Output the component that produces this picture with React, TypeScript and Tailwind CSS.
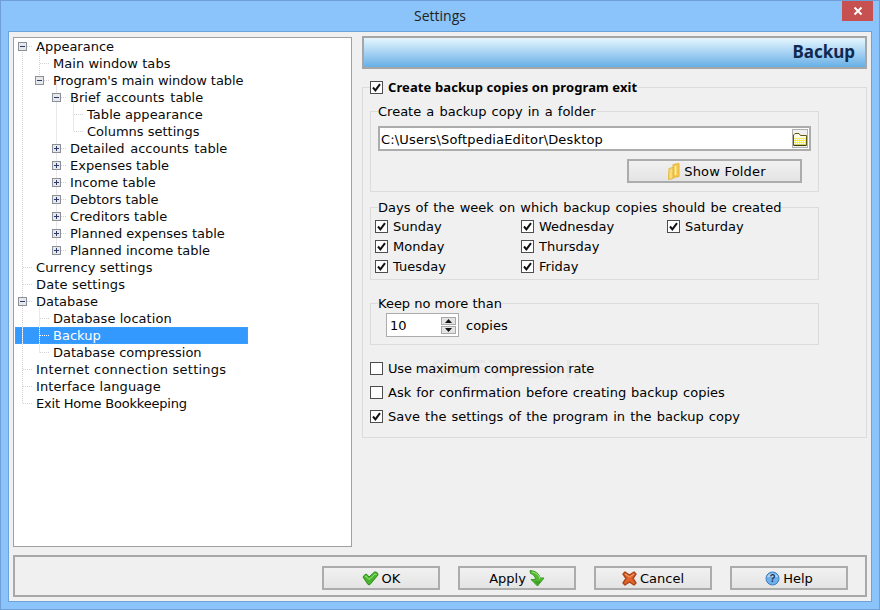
import React from 'react';

type Row = { label: string; level: 0 | 1 | 2 | 3; box?: 'minus' | 'plus'; selected?: boolean; fit?: string };

const rows: Row[] = [
  { label: 'Appearance', level: 0, box: 'minus' },
  { label: 'Main window tabs', level: 1, fit: 'tracking-[0.05px]' },
  { label: "Program's main window table", level: 1, box: 'minus', fit: 'tracking-[-0.07px]' },
  { label: 'Brief accounts table', level: 2, box: 'minus', fit: '[word-spacing:1.5px]' },
  { label: 'Table appearance', level: 3, fit: 'tracking-[0.05px]' },
  { label: 'Columns settings', level: 3 },
  { label: 'Detailed accounts table', level: 2, box: 'plus', fit: '[word-spacing:1.5px]' },
  { label: 'Expenses table', level: 2, box: 'plus' },
  { label: 'Income table', level: 2, box: 'plus', fit: 'tracking-[0.08px]' },
  { label: 'Debtors table', level: 2, box: 'plus' },
  { label: 'Creditors table', level: 2, box: 'plus', fit: 'tracking-[0.07px]' },
  { label: 'Planned expenses table', level: 2, box: 'plus' },
  { label: 'Planned income table', level: 2, box: 'plus', fit: 'tracking-[-0.05px]' },
  { label: 'Currency settings', level: 0, fit: 'tracking-[0.12px]' },
  { label: 'Date settings', level: 0, fit: 'tracking-[0.16px]' },
  { label: 'Database', level: 0, box: 'minus' },
  { label: 'Database location', level: 1, fit: 'tracking-[0.06px]' },
  { label: 'Backup', level: 1, selected: true },
  { label: 'Database compression', level: 1 },
  { label: 'Internet connection settings', level: 0, fit: 'tracking-[0.25px]' },
  { label: 'Interface language', level: 0, fit: 'tracking-[0.11px]' },
  { label: 'Exit Home Bookkeeping', level: 0, fit: 'tracking-[-0.2px]' },
];

const indent = ['pl-[21px]', 'pl-[38px]', 'pl-[55px]', 'pl-[72px]'];
const boxPos = ['left-[3px]', 'left-[20px]', 'left-[37px]', 'left-[54px]'];

// dotted connector lines of the tree, coordinates relative to the tree's inner box
const TreeLines = () => {
  const y = (i: number) => 8.5 + 17 * i;
  const d = '#d2d2d2';
  const v = (x: number, a: number, b: number) => <line x1={x} x2={x} y1={a} y2={b} stroke={d} strokeDasharray="1 1" />;
  const h = (x: number, i: number) => <line x1={x} x2={x + 10} y1={y(i)} y2={y(i)} stroke={d} strokeDasharray="1 1" />;
  return (
    <svg className="absolute left-0 top-0" width="240" height="400">
      {v(7.5, 8, y(21))}
      {v(24.5, 8, y(2))}
      {v(41.5, y(2), y(12))}
      {v(58.5, y(3), y(5))}
      {v(24.5, y(15), y(18))}
      {[1, 2, 16, 17, 18].map((i) => <React.Fragment key={i}>{h(25, i)}</React.Fragment>)}
      {[3, 6, 7, 8, 9, 10, 11, 12].map((i) => <React.Fragment key={i}>{h(42, i)}</React.Fragment>)}
      {[4, 5].map((i) => <React.Fragment key={i}>{h(59, i)}</React.Fragment>)}
      {[0, 13, 14, 15, 19, 20, 21].map((i) => <React.Fragment key={i}>{h(8, i)}</React.Fragment>)}
      <line x1="7.5" x2="7.5" y1="289" y2="306" stroke="#fff" strokeDasharray="1 1" />
      <line x1="24.5" x2="24.5" y1="289" y2="306" stroke="#fff" strokeDasharray="1 1" />
      <line x1="25" x2="35" y1={y(17)} y2={y(17)} stroke="#fff" strokeDasharray="1 1" />
    </svg>
  );
};

const Expander = ({ kind }: { kind: 'minus' | 'plus' }) => (
  <svg width="9" height="9" viewBox="0 0 9 9" className="block">
    <rect x="0.5" y="0.5" width="8" height="8" fill="#e8e8ea" stroke="#8b8f98" />
    <line x1="2" x2="7" y1="4.5" y2="4.5" stroke="#2d3a6e" />
    {kind === 'plus' && <line x1="4.5" x2="4.5" y1="2" y2="7" stroke="#2d3a6e" />}
  </svg>
);

const Check = ({ on = true }: { on?: boolean }) => (
  <span className="w-[13px] h-[13px] shrink-0 border border-[#4d4d4d] bg-white flex items-center justify-center">
    {on && (
      <svg width="11" height="11" viewBox="0 0 11 11">
        <path d="M2 5.5 L4.4 8.3 L9 2.2" fill="none" stroke="#111" strokeWidth="2" />
      </svg>
    )}
  </span>
);

const CheckRow = ({ label, on = true, textClass = '', className = '' }: { label: string; on?: boolean; textClass?: string; className?: string }) => (
  <label className={`flex items-center gap-[5px] h-[17px] ${className}`}>
    <Check on={on} />
    <span className={textClass}>{label}</span>
  </label>
);

const OkIcon = () => (
  <svg width="17" height="15" viewBox="0 0 17 15">
    <path d="M1 6 L3 3.5 Q4 3 5 3.5 L7 6 L12.5 1 Q14 0.5 15.5 2 L16 4 L8 13.5 Q7 14 6 13.5 Z" fill="#49b52c" stroke="#2f8a22" strokeLinejoin="round" />
    <path d="M3 5.5 L4 5 L7 8.5 L13 3 L14.5 3.5" fill="none" stroke="#a5e67f" />
  </svg>
);

const ApplyIcon = () => (
  <svg width="16" height="17" viewBox="0 0 16 17">
    <path d="M1 0.5 C6 1 10 3 11 8 L15 8 L8.5 16 L2 9.5 L6.5 9.5 C6.5 6.5 4 4 1.5 3.5 Z" fill="#52b82f" stroke="#3a9a25" strokeLinejoin="round" />
    <path d="M3 2 C7 2.5 10 5 11 9" fill="none" stroke="#a9e57c" />
    <path d="M5 11 L12 11 L8.5 15 Z" fill="#3f9f28" />
  </svg>
);

const CancelIcon = () => (
  <svg width="15" height="15" viewBox="0 0 15 15">
    <path d="M3 1 L7.5 4 L12 1 L14 3 L11 7.5 L14 12 L12 14 L7.5 11 L3 14 L1 12 L4 7.5 L1 3 Z" fill="#e0632a" stroke="#a9461c" strokeLinejoin="round" strokeWidth="1.4" />
    <path d="M3 3 L7.5 6 L12 3" fill="none" stroke="#f2a878" />
  </svg>
);

const HelpIcon = () => (
  <svg width="15" height="15" viewBox="0 0 15 15">
    <circle cx="7.5" cy="7.5" r="6.5" fill="#6fb0e8" stroke="#3c7fc0" />
    <path d="M2 6 A6 6 0 0 1 13 6 Z" fill="#b5dbf6" />
    <text x="7.5" y="11" textAnchor="middle" fontSize="10" fontWeight="700" fill="#1c2f55" fontFamily="'Liberation Sans', sans-serif">?</text>
  </svg>
);

const FolderSmall = () => (
  <svg width="14" height="14" viewBox="0 0 14 14">
    <path d="M0.5 13 V3 L2 1.5 H6 L7.5 3.5 H13.5 V13 Z" fill="#fbfbe8" stroke="#5c5a14" />
    <rect x="1" y="6" width="12" height="6.5" fill="#f6f04a" />
    <path d="M1 7.5 H13 M1 9.5 H13 M1 11.5 H13" stroke="#fff" strokeDasharray="1 1" />
    <path d="M0.5 13.5 H13.5" stroke="#3a3a10" />
  </svg>
);

const FolderTall = () => (
  <svg width="12" height="17" viewBox="0 0 12 17">
    <path d="M5 1.5 L11 0.5 V13.5 L5 14.5 Z" fill="#f5c84a" stroke="#e3b545" />
    <path d="M1 5.5 L5 4.5 V15.5 L0.5 16.5 Z" fill="#f9dc74" stroke="#e3b545" />
    <path d="M7.5 3 V12" stroke="#fff2b5" strokeWidth="1.5" />
  </svg>
);

const Btn = ({ children, className = '' }: { children: React.ReactNode; className?: string }) => (
  <button className={`border-2 border-[#acacac] bg-gradient-to-b from-[#f1f1f1] to-[#e4e4e4] flex items-center justify-center gap-[3px] ${className}`}>
    {children}
  </button>
);

const Group = ({ legend, legendClass = '', className = '', children }: { legend: string; legendClass?: string; className?: string; children: React.ReactNode }) => (
  <fieldset className={`border border-[#dcdcdc] ${className}`}>
    <legend className={`ml-[7px] h-[17px] leading-[17px] ${legendClass}`}>{legend}</legend>
    {children}
  </fieldset>
);

const Days = [
  ['Sunday', 'Wednesday', 'Saturday'],
  ['Monday', 'Thursday'],
  ['Tuesday', 'Friday'],
];

export default function App() {
  return (
    <div className="w-[880px] h-[610px] flex flex-col bg-[#8ac4fa] border border-[#6f9fd6] text-[13px] text-black overflow-hidden relative font-['DejaVu_Sans',sans-serif]">
      <div className="h-[30px] pb-[2px] shrink-0 flex items-center justify-center text-[14px] text-[#222] font-['Open_Sans',sans-serif]">Settings</div>
      <button className="absolute right-[6px] top-0 w-[31px] h-[20px] bg-[#c75050] flex items-center justify-center">
        <svg width="10" height="10" viewBox="0 0 10 10"><path d="M1.5 1.5 L8.5 8.5 M8.5 1.5 L1.5 8.5" stroke="#fff" strokeWidth="2" /></svg>
      </button>

      <div className="mx-[7px] mb-[7px] flex-1 flex flex-col bg-[#f0f0f0] border border-[#6ea3da] pl-[4px] pr-[4px]">
        <div className="flex flex-1 items-start">
          {/* tree */}
          <div className="mt-[5px] w-[339px] h-[510px] shrink-0 border border-[#a0a0a0] bg-white px-px">
            <div className="relative">
              {rows.map((r) => (
                <div key={r.label} className="relative h-[17px] flex items-center">
                  {r.selected && <div className="absolute left-0 top-0 w-[233px] h-[17px] bg-[#3399ff] border border-dotted border-[#d9822b]" />}
                  <span className={`relative leading-[17px] whitespace-nowrap ${indent[r.level]} ${r.selected ? 'text-white' : 'text-[#0a0a0a]'} ${r.fit ?? ''}`}>{r.label}</span>
                </div>
              ))}
              <TreeLines />
              {rows.map((r, i) =>
                r.box ? (
                  <div key={r.label} className={`absolute ${boxPos[r.level]}`} style={{ top: 17 * i + 4 }}>
                    <Expander kind={r.box} />
                  </div>
                ) : null,
              )}
            </div>
          </div>

          {/* right side */}
          <div className="ml-[10px] mt-[4px] w-[505px] shrink-0 flex flex-col relative">
            <div className="h-[33px] pb-[1px] border-2 border-[#a6a6a6] bg-gradient-to-b from-[#e6f6fe] to-[#66afe6] flex items-center justify-end pr-[10px] font-bold text-[17px] text-[#10294f] font-['Noto_Sans',sans-serif]">
              Backup
            </div>

            <fieldset className="mt-[10px] border border-[#dcdcdc] h-[359px] flex flex-col pl-[7px]">
              <legend className="h-[17px] leading-[17px]">
                <CheckRow label="Create backup copies on program exit" textClass="font-bold font-['Noto_Sans',sans-serif] tracking-[0.1px]" />
              </legend>

              <Group legend="Create a backup copy in a folder" legendClass="[word-spacing:1px]" className="mt-[7px] w-[449px] h-[89px] flex flex-col">
                <div className="mx-[7px] mt-[6px] h-[25px] border-2 border-[#acacac] bg-white flex items-center justify-between pl-[1px] pr-[1px]">
                  <span className="pt-[2px] tracking-[0.16px]">C:\Users\SoftpediaEditor\Desktop</span>
                  <span className="w-[16px] h-[19px] border border-[#b0b0b0] bg-[#f0f0f0] flex items-center justify-center"><FolderSmall /></span>
                </div>
                <div className="flex justify-end pr-[16px] mt-[8px]">
                  <Btn className="w-[175px] h-[24px] pl-[5px] gap-[4px]"><FolderTall /> <span className="tracking-[0.2px] pt-px">Show Folder</span></Btn>
                </div>
              </Group>

              <Group legend="Days of the week on which backup copies should be created" legendClass="[word-spacing:1px]" className="mt-[7px] w-[449px] h-[81px]">
                <div className="flex flex-col gap-[3px] mt-[2px]">
                  {Days.map((row, i) => (
                    <div key={i} className="grid grid-cols-[146px_146px_146px] pl-[4px]">
                      {row.map((d) => <CheckRow key={d} label={d} />)}
                    </div>
                  ))}
                </div>
              </Group>

              <Group legend="Keep no more than" className="mt-[15px] w-[449px] h-[50px]">
                <div className="flex items-center pl-[15px] gap-[7px] mt-[1px]">
                  <div className="w-[73px] h-[24px] border border-[#acacac] bg-white flex items-center justify-between pl-[3px] pr-[2px]">
                    <span className="pt-[1px]">10</span>
                    <span className="flex flex-col gap-px">
                      <span className="w-[15px] h-[8px] bg-[#e4e4e4] border border-[#a8a8a8] flex items-center justify-center"><svg width="7" height="4"><path d="M3.5 0 L7 4 H0 Z" fill="#111" /></svg></span>
                      <span className="w-[15px] h-[8px] bg-[#e4e4e4] border border-[#a8a8a8] flex items-center justify-center"><svg width="7" height="4"><path d="M0 0 H7 L3.5 4 Z" fill="#111" /></svg></span>
                    </span>
                  </div>
                  <span className="pt-[1px]">copies</span>
                </div>
              </Group>

              <div className="mt-[15px] flex flex-col gap-[7px]">
                <CheckRow label="Use maximum compression rate" on={false} textClass="tracking-[-0.18px]" />
                <CheckRow label="Ask for confirmation before creating backup copies" on={false} textClass="[word-spacing:0.8px]" />
                <CheckRow label="Save the settings of the program in the backup copy" textClass="[word-spacing:1px]" />
              </div>
            </fieldset>

            {/* faint watermark over the options */}
            <div className="absolute left-[68px] top-[322px] text-[25px] leading-[24px] font-bold tracking-wide text-black/[0.03] pointer-events-none">SOFTPEDIA</div>
          </div>
        </div>

        {/* footer */}
        <div className="mb-[4px] h-[42px] border-2 border-[#a8a8a8] flex items-start justify-end gap-[18px] pr-[17px] pt-[9px]">
          <Btn className="w-[118px] h-[24px]"><OkIcon /> <span className="pt-px">OK</span></Btn>
          <Btn className="w-[118px] h-[24px]"><span className="pt-px">Apply</span> <ApplyIcon /></Btn>
          <Btn className="w-[118px] h-[24px]"><CancelIcon /> <span className="pt-px">Cancel</span></Btn>
          <Btn className="w-[118px] h-[24px]"><HelpIcon /> <span className="pt-px">Help</span></Btn>
        </div>
      </div>
    </div>
  );
}
